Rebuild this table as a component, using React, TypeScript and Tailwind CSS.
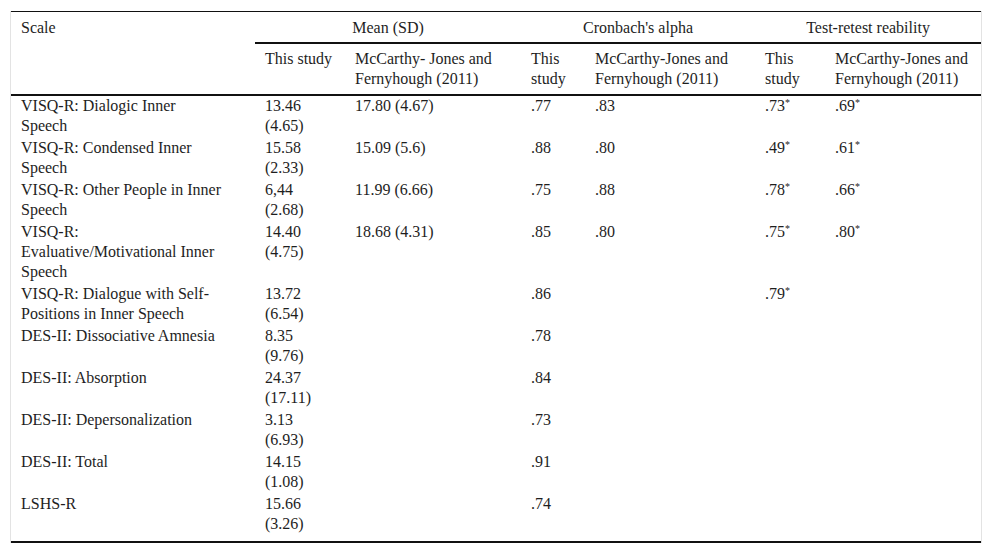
import React from "react";

type Row = {
  scale: string[];
  mean: string[];
  mccMean?: string;
  alpha?: string;
  mccAlpha?: string;
  retest?: string;
  mccRetest?: string;
};

const rows: Row[] = [
  { scale: ["VISQ-R: Dialogic Inner", "Speech"], mean: ["13.46", "(4.65)"], mccMean: "17.80 (4.67)", alpha: ".77", mccAlpha: ".83", retest: ".73", mccRetest: ".69" },
  { scale: ["VISQ-R: Condensed Inner", "Speech"], mean: ["15.58", "(2.33)"], mccMean: "15.09 (5.6)", alpha: ".88", mccAlpha: ".80", retest: ".49", mccRetest: ".61" },
  { scale: ["VISQ-R: Other People in Inner", "Speech"], mean: ["6,44", "(2.68)"], mccMean: "11.99 (6.66)", alpha: ".75", mccAlpha: ".88", retest: ".78", mccRetest: ".66" },
  { scale: ["VISQ-R:", "Evaluative/Motivational Inner", "Speech"], mean: ["14.40", "(4.75)"], mccMean: "18.68 (4.31)", alpha: ".85", mccAlpha: ".80", retest: ".75", mccRetest: ".80" },
  { scale: ["VISQ-R: Dialogue with Self-", "Positions in Inner Speech"], mean: ["13.72", "(6.54)"], alpha: ".86", retest: ".79" },
  { scale: ["DES-II: Dissociative Amnesia"], mean: ["8.35", "(9.76)"], alpha: ".78" },
  { scale: ["DES-II: Absorption"], mean: ["24.37", "(17.11)"], alpha: ".84" },
  { scale: ["DES-II: Depersonalization"], mean: ["3.13", "(6.93)"], alpha: ".73" },
  { scale: ["DES-II: Total"], mean: ["14.15", "(1.08)"], alpha: ".91" },
  { scale: ["LSHS-R"], mean: ["15.66", "(3.26)"], alpha: ".74" },
];

function Lines({ items }: { items: string[] }) {
  return (
    <>
      {items.map((t, i) => (
        <div key={i}>{t}</div>
      ))}
    </>
  );
}

function Star({ value }: { value?: string }) {
  if (!value) return null;
  return (
    <>
      {value}
      <sup className="text-[10px] -top-[0.55em]">*</sup>
    </>
  );
}

export default function App() {
  const head = "pl-[10px] pr-2 text-left font-normal align-top";
  const sub = `${head} border-b-2 border-[#111] pt-[5px] pb-[5px]`;
  const group = "font-normal text-center border-t border-b-2 border-[#111] pt-[6px] pb-[4px]";
  return (
    <div className="min-h-screen bg-white pt-[11px] pl-[10px] font-['Liberation_Serif',serif]">
      <div className="w-[972px] border-x border-[#e3e3e3] text-[16px] leading-[20px] text-[#1e1e1e]">
        <table className="w-full border-separate border-spacing-0 table-fixed">
          <colgroup>
            <col className="w-[244px]" />
            <col className="w-[90px]" />
            <col className="w-[176px]" />
            <col className="w-[64px]" />
            <col className="w-[170px]" />
            <col className="w-[70px]" />
            <col className="w-[156px]" />
          </colgroup>
          <thead>
            <tr>
              <th rowSpan={2} className={`${head} border-t border-b-2 border-[#111] pt-[6px]`}>
                Scale
              </th>
              <th colSpan={2} className={group}>
                Mean (SD)
              </th>
              <th colSpan={2} className={group}>
                Cronbach's alpha
              </th>
              <th colSpan={2} className={group}>
                Test-retest reability
              </th>
            </tr>
            <tr>
              <th className={sub}>This study</th>
              <th className={sub}>
                McCarthy- Jones and
                <br />
                Fernyhough (2011)
              </th>
              <th className={sub}>
                This
                <br />
                study
              </th>
              <th className={sub}>
                McCarthy-Jones and
                <br />
                Fernyhough (2011)
              </th>
              <th className={sub}>
                This
                <br />
                study
              </th>
              <th className={sub}>
                McCarthy-Jones and
                <br />
                Fernyhough (2011)
              </th>
            </tr>
          </thead>
          <tbody>
            {rows.map((r, i) => {
              const last = i === rows.length - 1;
              const cell = last
                ? "pl-[10px] pr-2 align-top whitespace-nowrap pt-0 pb-[7px] border-b-2 border-[#111]"
                : "pl-[10px] pr-2 align-top whitespace-nowrap pt-0 pb-[2px]";
              return (
                <tr key={i}>
                  <td className={cell}>
                    <Lines items={r.scale} />
                  </td>
                  <td className={cell}>
                    <Lines items={r.mean} />
                  </td>
                  <td className={cell}>{r.mccMean}</td>
                  <td className={cell}>{r.alpha}</td>
                  <td className={cell}>{r.mccAlpha}</td>
                  <td className={cell}>
                    <Star value={r.retest} />
                  </td>
                  <td className={cell}>
                    <Star value={r.mccRetest} />
                  </td>
                </tr>
              );
            })}
          </tbody>
        </table>
      </div>
    </div>
  );
}
